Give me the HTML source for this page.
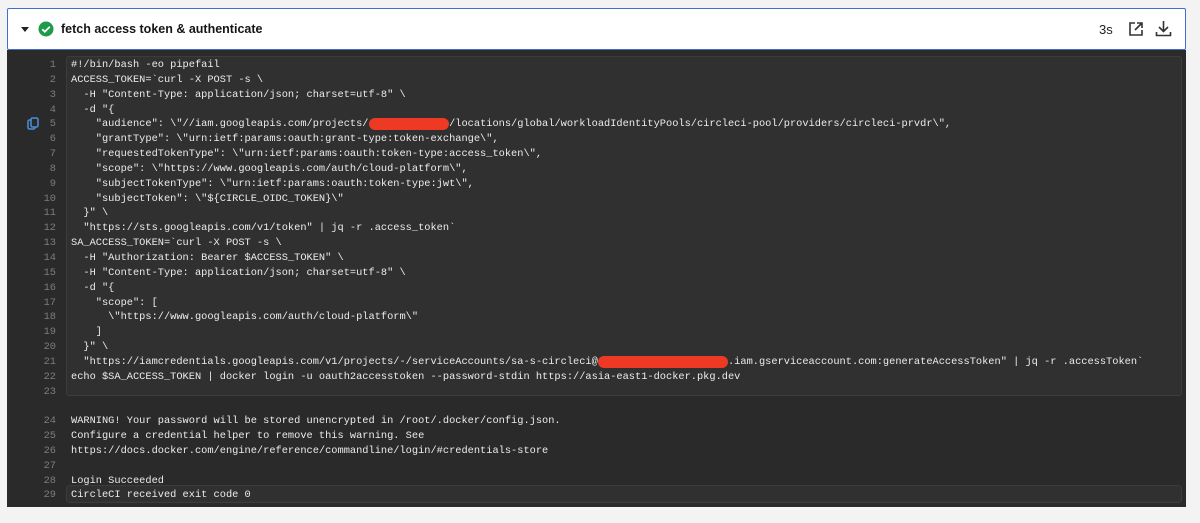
<!DOCTYPE html>
<html><head><meta charset="utf-8"><style>
body{margin:0;background:#f3f3f3;width:1200px;height:523px;overflow:hidden;font-family:"Liberation Sans",sans-serif}
.hdr{position:absolute;left:7px;top:8px;width:1177px;height:40px;background:#fff;border:1px solid #3b6fd0;border-radius:2px}
.title{position:absolute;left:53px;top:13px;font-weight:bold;font-size:12.5px;color:#161616}
.dark{position:absolute;left:7px;top:50px;width:1179px;height:457px;background:#2a2a2a}
.box{position:absolute;left:59px;width:1114px;background:#303030;border:1px solid #3c3c3c;border-radius:3px}
.code{position:absolute;left:7px;top:58px;width:1170px;height:450px;font-family:"Liberation Mono",monospace;font-size:10.33px;line-height:14.85px;color:#ececec;white-space:pre}
.ln{position:absolute;left:0;top:0;width:49px;text-align:right;color:#7d7d7d}
.tx{position:absolute;left:64px;top:0}
.r{background:#ee3a24;border-radius:6px;color:transparent}
</style></head><body>
<div class="hdr">
<svg style="position:absolute;left:12px;top:16px" width="10" height="8"><path d="M1 2h8L5 7z" fill="#222"/></svg>
<svg style="position:absolute;left:30px;top:12px" width="16" height="16"><circle cx="8" cy="8" r="7.5" fill="#1f9a4a"/><path d="M4.3 8.2l2.5 2.5 5-5" stroke="#fff" stroke-width="1.8" fill="none"/></svg>
<div class="title">fetch access token &amp; authenticate</div>
<div style="position:absolute;left:1091px;top:13px;font-size:13px;color:#222">3s</div>
<svg style="position:absolute;left:1120px;top:12px" width="16" height="16"><path d="M7 2H2v12h12V9" stroke="#333" stroke-width="1.6" fill="none"/><path d="M9 2h5v5M14 2L7 9" stroke="#333" stroke-width="1.6" fill="none"/></svg>
<svg style="position:absolute;left:1147px;top:11px" width="17" height="17"><path d="M8.5 1v10M4 7l4.5 4.5L13 7" stroke="#333" stroke-width="1.6" fill="none"/><path d="M1.5 12v3.5h14V12" stroke="#333" stroke-width="1.6" fill="none"/></svg>
</div>
<div class="dark">
<div class="box" style="top:6px;height:338px"></div>
<div class="box" style="top:435px;height:16px"></div>
<svg style="position:absolute;left:20px;top:67px" width="12" height="14"><rect x="1" y="3" width="7" height="9" rx="1.5" fill="none" stroke="#4a90d9" stroke-width="1.5"/><rect x="4" y="1" width="7" height="9" rx="1.5" fill="#2a2a2a" stroke="#4a90d9" stroke-width="1.5"/></svg>
</div>
<div class="code"><div class="ln">1
2
3
4
5
6
7
8
9
10
11
12
13
14
15
16
17
18
19
20
21
22
23

24
25
26
27
28
29</div><div class="tx">#!/bin/bash -eo pipefail
ACCESS_TOKEN=`curl -X POST -s \
  -H "Content-Type: application/json; charset=utf-8" \
  -d "{
    "audience": \"//iam.googleapis.com/projects/<span class="r">             </span>/locations/global/workloadIdentityPools/circleci-pool/providers/circleci-prvdr\",
    "grantType": \"urn:ietf:params:oauth:grant-type:token-exchange\",
    "requestedTokenType": \"urn:ietf:params:oauth:token-type:access_token\",
    "scope": \"https://www.googleapis.com/auth/cloud-platform\",
    "subjectTokenType": \"urn:ietf:params:oauth:token-type:jwt\",
    "subjectToken": \"${CIRCLE_OIDC_TOKEN}\"
  }" \
  "https://sts.googleapis.com/v1/token" | jq -r .access_token`
SA_ACCESS_TOKEN=`curl -X POST -s \
  -H "Authorization: Bearer $ACCESS_TOKEN" \
  -H "Content-Type: application/json; charset=utf-8" \
  -d "{
    "scope": [
      \"https://www.googleapis.com/auth/cloud-platform\"
    ]
  }" \
  "https://iamcredentials.googleapis.com/v1/projects/-/serviceAccounts/sa-s-circleci@<span class="r">                     </span>.iam.gserviceaccount.com:generateAccessToken" | jq -r .accessToken`
echo $SA_ACCESS_TOKEN | docker login -u oauth2accesstoken --password-stdin https://asia-east1-docker.pkg.dev


WARNING! Your password will be stored unencrypted in /root/.docker/config.json.
Configure a credential helper to remove this warning. See
https://docs.docker.com/engine/reference/commandline/login/#credentials-store

Login Succeeded
CircleCI received exit code 0</div></div>
</body></html>
